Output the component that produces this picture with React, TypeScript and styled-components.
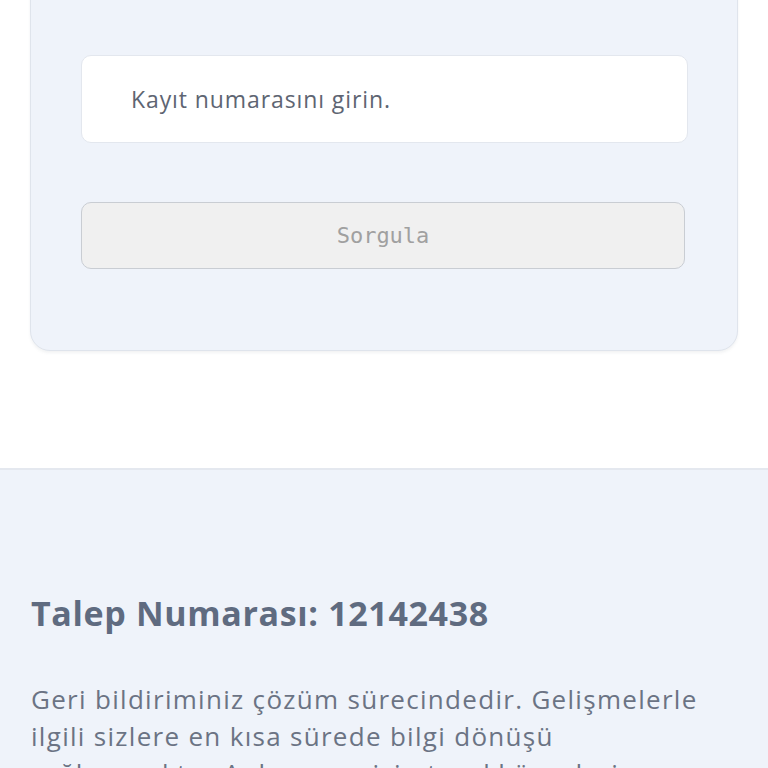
import * as React from "react"
import styled, { createGlobalStyle } from 'styled-components'

const GlobalStyle = createGlobalStyle`
    html, body {
        margin: 0;
        padding: 0;
        background: #ffffff;
        font-family: "Open Sans", "Noto Sans", sans-serif;
        overflow: hidden;
    }
`

const Page = styled.div`
    width: 768px;
    display: flex;
    flex-direction: column;
`

const QueryCard = styled.section`
    margin: -30px 30px 0;
    padding: 84px 49px 81px 50px;
    background: #eff3fa;
    border: 1px solid #dfe4ec;
    border-radius: 20px;
    box-shadow: 0 2px 3px rgba(90, 100, 120, 0.08);
    display: flex;
    flex-direction: column;
    gap: 59px;
`

const RecordInput = styled.input`
    box-sizing: border-box;
    width: 100%;
    height: 88px;
    padding: 0 0 0 49px;
    border: 1px solid #e3e7ee;
    border-radius: 10px;
    background: #ffffff;
    font-family: "Open Sans", "Noto Sans", sans-serif;
    font-size: 23px;
    letter-spacing: 0.9px;
    color: #5e6572;
    outline: none;

    &::placeholder {
        color: #5e6572;
    }
`

const QueryButton = styled.button`
    box-sizing: border-box;
    width: calc(100% - 3px);
    height: 67px;
    border: 1px solid #c9cdd3;
    border-radius: 10px;
    background: #f0f0f0;
    color: #a0a0a0;
    font-family: "DejaVu Sans Mono", monospace;
    font-size: 22px;
    cursor: default;
`

const ResultSection = styled.section`
    margin-top: 117px;
    border-top: 2px solid #e4e8ef;
    background: #eff3fa;
    padding: 120px 31px 40px;
    min-height: 400px;
`

const ResultTitle = styled.h2`
    margin: 0 0 45px;
    font-size: 34px;
    font-weight: 700;
    letter-spacing: 0.65px;
    color: #5f6b80;
`

const ResultText = styled.p`
    margin: 0;
    width: 692px;
    font-size: 26px;
    letter-spacing: 1.3px;
    line-height: 37px;
    color: #6b7384;
`

export default function App() {
    const [record, setRecord] = React.useState('')

    return (
        <Page>
            <GlobalStyle />
            <QueryCard>
                <RecordInput
                    placeholder="Kayıt numarasını girin."
                    value={record}
                    onChange={e => setRecord(e.target.value)}
                />
                <QueryButton disabled={!record}>Sorgula</QueryButton>
            </QueryCard>
            <ResultSection>
                <ResultTitle>Talep Numarası: 12142438</ResultTitle>
                <ResultText>
                    Geri bildiriminiz çözüm sürecindedir. Gelişmelerle ilgili sizlere en kısa sürede bilgi dönüşü
                    sağlanacaktır. Anlayışınız için teşekkür ederiz. Mesai saatlerimiz hafta içi 09:00 - 18:00 arasıdır.
                </ResultText>
            </ResultSection>
        </Page>
    )
}
